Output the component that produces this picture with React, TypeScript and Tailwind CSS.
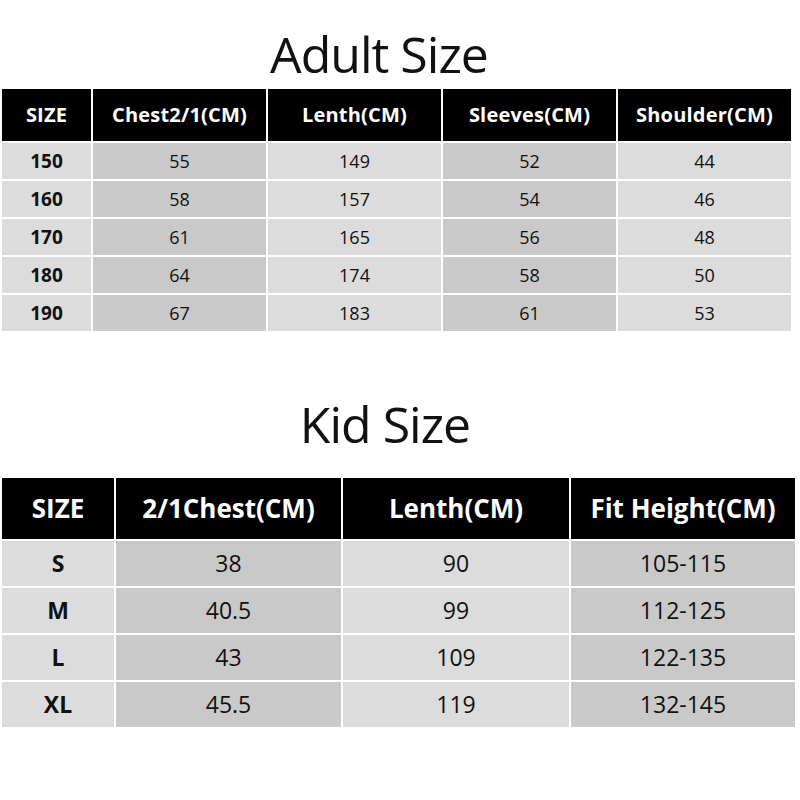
import * as React from 'react';

const adultHead = ['SIZE', 'Chest2/1(CM)', 'Lenth(CM)', 'Sleeves(CM)', 'Shoulder(CM)'];
const adultRows = [
  ['150', '55', '149', '52', '44'],
  ['160', '58', '157', '54', '46'],
  ['170', '61', '165', '56', '48'],
  ['180', '64', '174', '58', '50'],
  ['190', '67', '183', '61', '53'],
];

const kidHead = ['SIZE', '2/1Chest(CM)', 'Lenth(CM)', 'Fit Height(CM)'];
const kidRows = [
  ['S', '38', '90', '105-115'],
  ['M', '40.5', '99', '112-125'],
  ['L', '43', '109', '122-135'],
  ['XL', '45.5', '119', '132-145'],
];

// alternating column shades, first column light
const shade = (i: number) => (i % 2 === 0 ? 'bg-[#dcdcdc]' : 'bg-[#c9c9c9]');

const App: React.FC = () => {
  return (
    <div className="w-[800px] h-[800px] bg-white overflow-hidden font-['Open_Sans',sans-serif] text-[#111]">
      {/* Adult */}
      <div className="pt-[29px] pr-[42px] h-[79px] text-center text-[50px] font-medium leading-none tracking-[-1px]">
        Adult Size
      </div>
      <div className="mt-[10px] ml-[2px] w-[789px] grid grid-cols-[89px_173px_173px_173px_173px] grid-rows-[52px_repeat(5,36px)] gap-[2px]">
        {adultHead.map((h) => (
          <div key={h} className="bg-black text-white font-bold text-[20px] tracking-[0.2px] flex items-center justify-center">
            {h}
          </div>
        ))}
        {adultRows.map((row) =>
          row.map((c, i) => (
            <div
              key={row[0] + i}
              className={`${shade(i)} flex items-center justify-center ${i === 0 ? 'font-bold text-[19px]' : 'text-[18px]'}`}
            >
              {c}
            </div>
          ))
        )}
      </div>

      {/* Kid */}
      <div className="mt-[68px] pr-[30px] h-[50px] text-center text-[50px] font-medium leading-none tracking-[-1px]">
        Kid Size
      </div>
      <div className="mt-[29px] ml-[2px] w-[793px] grid grid-cols-[112px_225px_226px_224px] grid-rows-[61px_repeat(4,45px)] gap-[2px]">
        {kidHead.map((h) => (
          <div key={h} className="bg-black text-white font-bold text-[26px] flex items-center justify-center">
            {h}
          </div>
        ))}
        {kidRows.map((row) =>
          row.map((c, i) => (
            <div
              key={row[0] + i}
              className={`${shade(i)} flex items-center justify-center text-[23px] ${i === 0 ? 'font-bold' : ''}`}
            >
              {c}
            </div>
          ))
        )}
      </div>
    </div>
  );
};

export default App;
